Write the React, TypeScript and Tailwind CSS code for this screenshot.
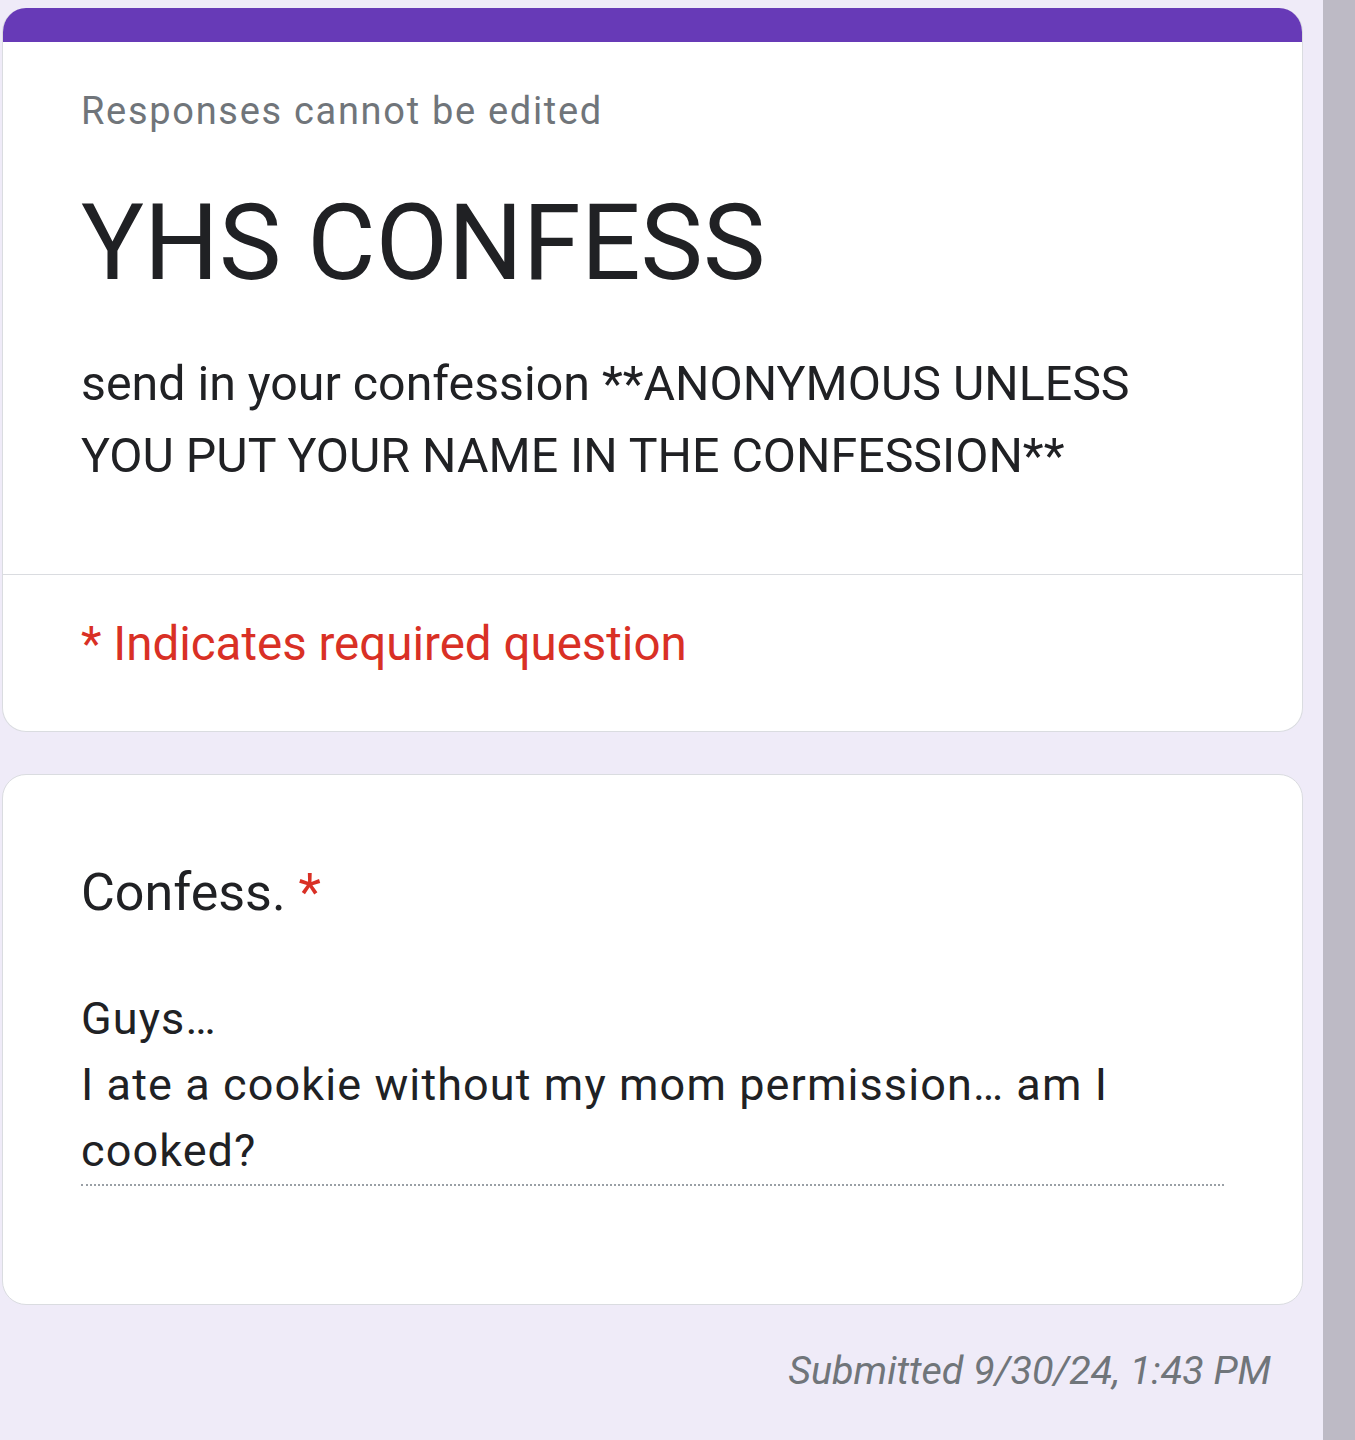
export default function App() {
  const font = { fontFamily: "Roboto, 'Liberation Sans', sans-serif" };
  return (
    <div className="w-[1355px] h-[1440px] flex bg-[#efebf8] overflow-hidden" style={font}>
      <div className="flex-1 flex flex-col pl-[2px] pr-[20px] pt-[8px]">
        <div className="rounded-[24px] overflow-hidden bg-white border border-[#dadce0] border-t-0">
          <div className="h-[34px] bg-[#673ab7]" />
          <div className="pl-[78px] pr-[80px] pt-[45px] pb-[82px]">
            <div className="text-[38px] leading-[48px] text-[#70757a] tracking-[1.7px]">
              Responses cannot be edited
            </div>
            <div className="mt-[46px] text-[105px] leading-[126px] text-[#202124]">YHS CONFESS</div>
            <div className="mt-[41px] text-[48.3px] leading-[72px] text-[#202124]">
              send in your confession **ANONYMOUS UNLESS YOU PUT YOUR NAME IN THE CONFESSION**
            </div>
          </div>
          <div className="h-px bg-[#dadce0]" />
          <div className="pl-[78px] pr-[80px] pt-[39px] pb-[57px]">
            <div className="text-[47.5px] leading-[60px] text-[#d93025]">* Indicates required question</div>
          </div>
        </div>

        <div className="mt-[42px] rounded-[24px] bg-white border border-[#dadce0] pl-[78px] pr-[78px] pt-[88px] pb-[118px]">
          <div className="text-[52px] leading-[60px] text-[#202124]">
            Confess. <span className="text-[#d93025]">*</span>
          </div>
          <div className="mt-[63px] text-[45px] leading-[66px] text-[#202124] tracking-[1.1px] border-b-2 border-dotted border-[#9aa0a6]">
            <div>Guys…</div>
            <div>I ate a cookie without my mom permission… am I cooked?</div>
          </div>
        </div>

        <div className="mt-[44px] pr-[32px] text-right italic text-[39.5px] leading-[44px] text-[#70757a]">
          Submitted 9/30/24, 1:43 PM
        </div>
      </div>
      <div className="w-[32px] h-full bg-[#bdbac5]" />
    </div>
  );
}
